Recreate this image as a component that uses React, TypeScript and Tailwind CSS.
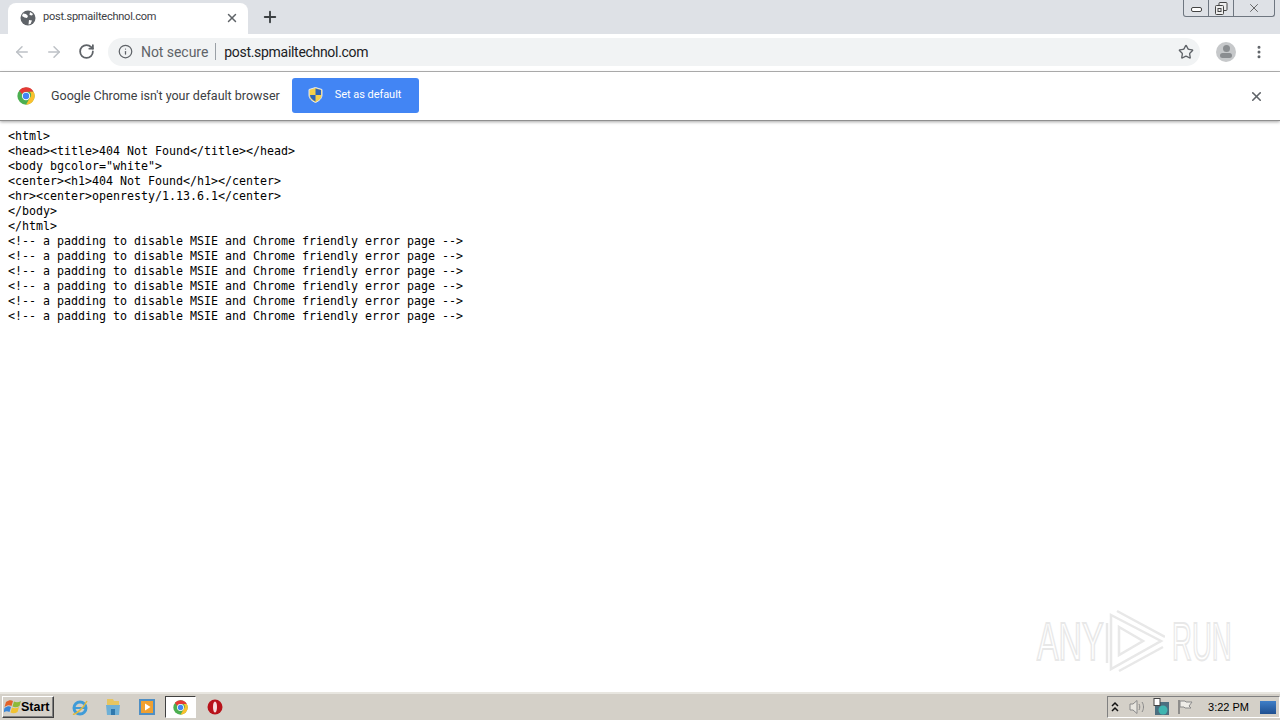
import { ArrowLeft, ArrowRight, Info, MoreVertical, Plus, RotateCw, Star, X } from "lucide-react";

const source = `<html>
<head><title>404 Not Found</title></head>
<body bgcolor="white">
<center><h1>404 Not Found</h1></center>
<hr><center>openresty/1.13.6.1</center>
</body>
</html>
<!-- a padding to disable MSIE and Chrome friendly error page -->
<!-- a padding to disable MSIE and Chrome friendly error page -->
<!-- a padding to disable MSIE and Chrome friendly error page -->
<!-- a padding to disable MSIE and Chrome friendly error page -->
<!-- a padding to disable MSIE and Chrome friendly error page -->
<!-- a padding to disable MSIE and Chrome friendly error page -->`;

function ChromeLogo({ size }: { size: number }) {
  return (
    <svg width={size} height={size} viewBox="0 0 48 48" className="shrink-0">
      <circle cx="24" cy="24" r="23" fill="#4caf50" />
      <path d="M24 1a23 23 0 0 1 20 11.5H24a11.5 11.5 0 0 0-10.5 7L6 9A23 23 0 0 1 24 1z" fill="#e53935" />
      <path d="M44 12.5A23 23 0 0 1 24 47l10-17.5a11.5 11.5 0 0 0 0-17z" fill="#fbc02d" />
      <circle cx="24" cy="24" r="11" fill="#fff" />
      <circle cx="24" cy="24" r="8.5" fill="#4285f4" />
    </svg>
  );
}

function Globe() {
  return (
    <svg width="16" height="16" viewBox="0 0 16 16" className="shrink-0">
      <circle cx="8" cy="8" r="7.5" fill="#5f6368" />
      <path d="M3 3.5l3 .5 2 2-1 2-2.5-.5L2 6zM9 10l3 .5-1.5 3.5-2 .5zM10 2l3 2-1 1.5-2.5-.5z" fill="#fff" />
    </svg>
  );
}

function Shield() {
  return (
    <svg width="15" height="16" viewBox="0 0 15 16">
      <path d="M7.5 0.5L14 2.5V8c0 3.500-3 6-6.500 7.500C4 14 1 11.500 1 8V2.500z" fill="#f6d04a" stroke="#dfe8f7" strokeWidth="1" />
      <path d="M7.500 1.500L13 3V8H7.500zM7.500 8v6.500C4.500 13 2 11 2 8z" fill="#2f64b8" />
    </svg>
  );
}

function StartFlag() {
  return (
    <svg width="18" height="18" viewBox="0 0 18 18" className="shrink-0">
      <path d="M2 4c3-2 5-2 7-1l-1.500 5c-2-1-4-1-7 1z" fill="#e2622a" />
      <path d="M10 3.500c2 1 4.500 1 7-.5l-1.500 5c-2.500 1.500-5 1.500-7 .5z" fill="#8cba3a" />
      <path d="M0.500 10c3-2 5-2 6.500-1L5.500 14c-2-1-4-1-6 .5z" fill="#3a86d8" />
      <path d="M8 9.500c2 1 4.500 1 7-.5l-1.500 5c-2.500 1.500-5 1.500-7 .5z" fill="#f1c232" />
    </svg>
  );
}

function IeIcon() {
  return (
    <svg width="18" height="18" viewBox="0 0 18 18">
      <circle cx="9" cy="10" r="6" fill="none" stroke="#3f9bd8" strokeWidth="3" />
      <path d="M3 10h12" stroke="#3f9bd8" strokeWidth="2" />
      <path d="M2 16c2 1 10-5 14-13" fill="none" stroke="#e0b93c" strokeWidth="1.500" />
    </svg>
  );
}

function FolderIcon() {
  return (
    <svg width="18" height="18" viewBox="0 0 18 18">
      <path d="M3 1h6l1 2h5v13H3z" fill="#e6c560" />
      <path d="M2 7h14l-1 10H3z" fill="#6fb0d6" />
      <rect x="7" y="11" width="4" height="6" fill="#2f78ad" />
    </svg>
  );
}

function MediaIcon() {
  return (
    <svg width="18" height="18" viewBox="0 0 18 18">
      <rect x="1" y="1" width="16" height="16" fill="#4f8fc4" />
      <rect x="3" y="3" width="12" height="12" fill="#f0a030" />
      <path d="M7 5.500l5.500 3.500L7 12.500z" fill="#fff" />
    </svg>
  );
}

function OperaIcon() {
  return (
    <svg width="16" height="16" viewBox="0 0 16 16">
      <circle cx="8" cy="8" r="7.500" fill="#b8121a" />
      <ellipse cx="8" cy="8" rx="2" ry="5.500" fill="#f7dede" />
    </svg>
  );
}

function TrayIcons() {
  return (
    <div className="flex items-center">
      <svg width="10" height="12" viewBox="0 0 10 12" className="mr-[8px]">
        <path d="M2 5l3-3 3 3M2 10l3-3 3 3" fill="none" stroke="#111" strokeWidth="1.500" />
      </svg>
      <svg width="18" height="16" viewBox="0 0 18 16" className="mr-[6px]">
        <path d="M2 5h3l4-3.500v13L5 11H2z" fill="#e8e6e0" stroke="#8a8a8a" />
        <path d="M11 5c1 2 1 4 0 6M14 3c2 3 2 7 0 10" fill="none" stroke="#8a8a8a" />
      </svg>
      <svg width="18" height="18" viewBox="0 0 18 18" className="mr-[7px]">
        <rect x="3" y="4" width="14" height="13" fill="#4c6f80" />
        <circle cx="11" cy="12" r="4.500" fill="#3fb5b0" />
        <rect x="2" y="0.500" width="6" height="7" fill="#fff" stroke="#444" />
      </svg>
      <svg width="16" height="16" viewBox="0 0 16 16">
        <path d="M2 1v14" stroke="#777" strokeWidth="1.500" />
        <path d="M3 2h5l1 1h6l-3 4 2 2H8L7 8H3z" fill="#efede8" stroke="#8a8a8a" />
      </svg>
    </div>
  );
}

function WatermarkMark() {
  return (
    <svg width="60" height="64" viewBox="0 0 60 64" fill="none" stroke="#e8e8e8" strokeWidth="2.500">
      <path d="M6 6L56 32 6 60z" />
      <path d="M12 2L60 28" />
      <path d="M14 18L38 32 14 46z" />
      <path d="M2 14v40" />
      <path d="M14 62L58 38" />
    </svg>
  );
}

export default function App() {
  return (
    <div className="relative flex h-[720px] w-[1280px] flex-col overflow-hidden bg-white font-['Roboto',sans-serif]">
      {/* Tab strip */}
      <div className="relative flex h-[34px] shrink-0 items-end bg-[#dee1e6] pl-2">
        <div className="flex h-[31px] w-[240px] items-center rounded-t-lg bg-white pb-[2px] pl-3 pr-[9px]">
          <Globe />
          <span className="ml-[7px] flex-1 text-[11px] tracking-[-0.23px] text-[#3c4043]">post.spmailtechnol.com</span>
          <X size={14} strokeWidth={2.500} className="text-[#5f6368]" />
        </div>
        <Plus size={18} strokeWidth={2.500} className="mb-[8px] ml-[13px] text-[#3c4043]" />
        <div className="absolute right-[5px] top-0 flex h-[17px] w-[92px] rounded-b-[3px] border border-t-0 border-[#6e7680] text-[#555]">
          <div className="flex w-[25px] items-center justify-center border-r border-[#6e7680]">
            <div className="mt-[3px] h-[5px] w-[11px] rounded-[2px] border border-[#444] bg-white" />
          </div>
          <div className="flex w-[25px] items-center justify-center border-r border-[#6e7680]">
            <svg width="13" height="13" viewBox="0 0 13 13" fill="#eee" stroke="#444">
              <rect x="4" y="0.500" width="8" height="8" rx="1" />
              <rect x="0.500" y="3.500" width="8" height="9" rx="1" />
              <rect x="3" y="6.500" width="3" height="3" />
            </svg>
          </div>
          <div className="flex flex-1 items-center justify-center">
            <X size={14} strokeWidth={1.500} />
          </div>
        </div>
      </div>

      {/* Toolbar */}
      <div className="flex h-[38px] shrink-0 items-center border-b border-[#b4b4b4] bg-white pb-[2px] pl-[13px] pr-[13px]">
        <ArrowLeft size={18} strokeWidth={2} className="text-[#bdc1c6]" />
        <ArrowRight size={18} strokeWidth={2} className="ml-[14px] text-[#bdc1c6]" />
        <RotateCw size={17} strokeWidth={2.500} className="ml-[15px] text-[#5f6368]" />
        <div className="ml-[13px] flex h-[28px] w-[1092px] items-center rounded-full bg-[#f1f3f4] pl-[10px] pr-[6px]">
          <Info size={15} strokeWidth={2} className="text-[#5f6368]" />
          <span className="ml-[8px] pt-[2px] text-[14px] tracking-[-0.05px] text-[#5f6368]">Not secure</span>
          <div className="ml-[7px] mr-[8px] h-[17px] w-px bg-[#9aa0a6]" />
          <span className="flex-1 pt-[2px] text-[14px] tracking-[-0.3px] text-[#202124]">post.spmailtechnol.com</span>
          <Star size={16} strokeWidth={2} className="text-[#5f6368]" />
        </div>
        <div className="ml-[16px] flex h-[20px] w-[20px] flex-col items-center justify-center rounded-full bg-[#c6c8ca]">
          <div className="h-[7px] w-[7px] rounded-full bg-[#8a8d90]" />
          <div className="mt-px h-[5px] w-[12px] rounded-full bg-[#8a8d90]" />
        </div>
        <MoreVertical size={16} strokeWidth={2.500} className="ml-[15px] text-[#5f6368]" />
      </div>

      {/* Default browser bar */}
      <div className="relative z-10 flex h-[49px] shrink-0 items-center border-b border-[#8f8f8f] bg-white pl-[17px] pr-4 shadow-[0_1px_3px_rgba(0,0,0,0.35)]">
        <ChromeLogo size={18} />
        <span className="ml-[16px] text-[12.500px] text-[#3c4043]">Google Chrome isn't your default browser</span>
        <div className="mb-[2px] ml-[12px] flex h-[35px] w-[127px] items-center rounded-[3px] bg-[#4285f4] pl-[16px]">
          <Shield />
          <span className="ml-[12px] text-[11px] tracking-[-0.05px] text-white">Set as default</span>
        </div>
        <X size={15} strokeWidth={2.500} className="ml-auto text-[#5f6368]" />
      </div>

      {/* Page */}
      <div className="relative flex-1 bg-white">
        <pre className="pl-2 pt-[8px] font-['DejaVu_Sans_Mono',monospace] text-[11.630px] leading-[15px] text-black">{source}</pre>
        <div className="absolute left-[1037px] top-[488px] flex items-center">
          <span className="w-[68px] origin-left scale-x-[0.6] whitespace-nowrap font-['Liberation_Sans',sans-serif] text-[54px] leading-none text-transparent [-webkit-text-stroke:2px_#e8e8e8]">ANY</span>
          <WatermarkMark />
          <span className="ml-[7px] w-[62px] origin-left scale-x-[0.51] whitespace-nowrap font-['Liberation_Sans',sans-serif] text-[54px] leading-none text-transparent [-webkit-text-stroke:2px_#e8e8e8]">RUN</span>
        </div>
      </div>

      {/* Taskbar */}
      <div className="flex h-[28px] shrink-0 items-center border-t-2 border-[#e8e6e0] bg-[#d4d0c8] pl-[2px]">
        <div className="flex h-[22px] w-[52px] items-center border border-b-[#404040] border-l-white border-r-[#404040] border-t-white pl-[1px] shadow-[inset_-1px_-1px_0_#808080]">
          <StartFlag />
          <span className="-ml-[1px] font-['Liberation_Sans',sans-serif] text-[12.500px] font-bold leading-none text-black">Start</span>
        </div>
        <div className="ml-[17px] flex w-[18px] justify-center"><IeIcon /></div>
        <div className="ml-[15px] flex w-[18px] justify-center"><FolderIcon /></div>
        <div className="ml-[16px] flex w-[18px] justify-center"><MediaIcon /></div>
        <div className="ml-[9px] flex h-[22px] w-[31px] items-center justify-center border border-b-white border-l-[#404040] border-r-white border-t-[#404040] bg-white">
          <ChromeLogo size={15} />
        </div>
        <div className="ml-[11px] flex w-[16px] justify-center"><OperaIcon /></div>
        <div className="ml-auto flex h-[22px] w-[173px] items-center border border-b-white border-l-[#808080] border-r-white border-t-[#808080] pl-[2px] pr-[3px]">
          <TrayIcons />
          <span className="ml-auto mr-[11px] font-['Liberation_Sans',sans-serif] text-[11px] text-black">3:22 PM</span>
          <div className="h-[13px] w-[16px] bg-[linear-gradient(180deg,#3f7fc8,#1f4f90)]" />
        </div>
      </div>
    </div>
  );
}
